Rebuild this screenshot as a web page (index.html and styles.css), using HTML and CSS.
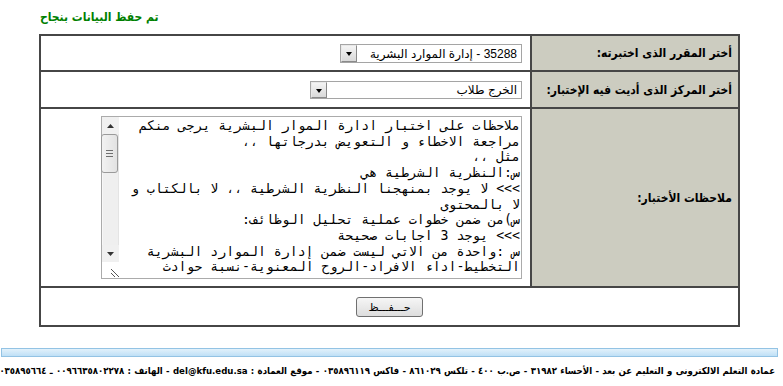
FILE: index.html
```html
<!DOCTYPE html>
<html lang="ar">
<head>
    <meta charset="UTF-8">
    <title>ملاحظات الاختبار</title>
    <link rel="stylesheet" href="styles.css">
</head>
<body>
    <div class="page">
        <p class="msg" dir="rtl">تم حفظ البيانات بنجاح</p>

        <table class="exam-form" dir="rtl">
            <tr class="row-course">
                <th class="label">أختر المقرر الذى اختبرته:</th>
                <td class="field">
                    <span class="combo combo-course">
                        <select>
                            <option>35288 - إدارة الموارد البشرية</option>
                        </select>
                        <span class="combo-btn"></span>
                    </span>
                </td>
            </tr>
            <tr class="row-center">
                <th class="label">أختر المركز الذى أديت فيه الإختبار:</th>
                <td class="field">
                    <span class="combo combo-center">
                        <select>
                            <option>الخرج طلاب</option>
                        </select>
                        <span class="combo-btn"></span>
                    </span>
                </td>
            </tr>
            <tr class="row-notes">
                <th class="label">ملاحظات الأختبار:</th>
                <td class="field">
                    <div class="notes-box">
                        <textarea class="notes" dir="rtl" wrap="off">ملاحظات على اختبار ادارة الموار البشرية يرجى منكم
مراجعة الاخطاء و التعويض بدرجاتها ،،
مثل ،،
س:النظرية الشرطية هي
&gt;&gt;&gt; لا يوجد بمنهجنا النظرية الشرطية ،، لا بالكتاب و
لا بالمحتوى
س)من ضمن خطوات عملية تحليل الوظائف:
&gt;&gt;&gt; يوجد 3 اجابات صحيحة
س :واحدة من الاتي ليست ضمن إدارة الموارد البشرية
التخطيط-اداء الافراد-الروح المعنوية-نسبة حوادث</textarea>
                        <!-- fake scrollbar, the screenshot browser hides real ones -->
                        <div class="vscroll">
                            <span class="sb-btn">
                                <svg width="7" height="4" viewBox="0 0 7 4"><path d="M0 4h7L3.5 0z" fill="#333"/></svg>
                            </span>
                            <span class="sb-track">
                                <span class="sb-thumb">
                                    <svg width="7" height="7" viewBox="0 0 7 7"><path d="M0 .5h7M0 3.5h7M0 6.5h7" stroke="#6f6f6f"/></svg>
                                </span>
                            </span>
                            <span class="sb-btn">
                                <svg width="7" height="4" viewBox="0 0 7 4"><path d="M0 0h7L3.5 4z" fill="#333"/></svg>
                            </span>
                            <span class="sb-corner">
                                <svg width="9" height="9" viewBox="0 0 9 9"><path d="M1 1l8 8M1 5l4 4" stroke="#555"/></svg>
                            </span>
                        </div>
                    </div>
                </td>
            </tr>
            <tr class="row-save">
                <td class="actions" colspan="2">
                    <button class="btn-save" type="button">حـــفـــظ</button>
                </td>
            </tr>
        </table>
    </div>

    <div class="footer">
        <div class="footer-bar"></div>
        <p class="footer-text" dir="rtl">عمادة التعلم الالكترونى و التعليم عن بعد - الأحساء ٣١٩٨٢ - ص.ب ٤٠٠ - تلكس ٨٦١٠٢٩ - فاكس ٠٣٥٨٩٦١١٩ - موقع العمادة : del@kfu.edu.sa - الهاتف : ٠٠٩٦٦٣٥٨٠٢٢٧٨ ـ ٠٣٥٨٩٥٦٦٤</p>
    </div>
</body>
</html>
```

FILE: styles.css
```css
* {
    box-sizing: border-box;
}

body {
    margin: 0;
    background: #fff;
    font-family: "DejaVu Sans", sans-serif;
    color: #000;
}

.page {
    width: 701px;
    margin-left: 39px;
}

.msg {
    margin: 0;
    padding: 9px 0 9px 1px;
    line-height: 16px;
    font-size: 12px;
    font-weight: bold;
    font-stretch: condensed;
    color: #008000;
    text-align: left;
}

/* main form table */
.exam-form {
    width: 701px;
    border-collapse: collapse;
    border: 2px solid #464646;
}

.exam-form th,
.exam-form td {
    border: 2px solid #464646;
    padding: 0;
}

.label {
    width: 208px;
    background: #ccccc0;
    text-align: right;
    padding: 0 6px 0 2px !important;
    font-size: 12px;
    font-weight: bold;
    font-stretch: condensed;
    white-space: nowrap;
    vertical-align: middle;
}

.field {
    text-align: right;
    padding: 0 8px !important;
    vertical-align: middle;
}

.row-course { height: 36px; }
.row-center { height: 37px; }
.row-notes { height: 179px; }
.row-save { height: 39px; }

/* dropdowns */
.combo {
    position: relative;
    display: inline-block;
    vertical-align: middle;
}

.combo select {
    appearance: none;
    -webkit-appearance: none;
    display: block;
    border: 1px solid #a5a5a5;
    border-radius: 0;
    background: #fff;
    font-family: "Liberation Sans", "DejaVu Sans", sans-serif;
    font-size: 12px;
    padding: 0 4px 0 20px;
    color: #000;
}

.combo-course select {
    width: 182px;
    height: 19px;
}

.combo-center select {
    width: 212px;
    height: 18px;
}

.combo-btn {
    position: absolute;
    left: 1px;
    top: 1px;
    bottom: 1px;
    width: 16px;
    background: linear-gradient(#f4f4f4, #d9d9d9);
    border: 1px solid #8a8a8a;
    border-top-color: #e8e8e8;
    border-left-color: #e8e8e8;
}

.combo-btn::after {
    content: "";
    position: absolute;
    left: 4px;
    top: 6px;
    border-left: 3px solid transparent;
    border-right: 3px solid transparent;
    border-top: 4px solid #000;
}

/* notes box */
.notes-box {
    display: inline-flex;
    vertical-align: middle;
    width: 421px;
    height: 163px;
    border: 1px solid #ababab;
    background: #fff;
}

.notes {
    flex: 1;
    min-width: 0;
    border: 0;
    outline: 0;
    resize: none;
    padding: 1px 1px 2px 3px;
    font-family: "DejaVu Sans Mono", monospace;
    font-size: 13.2px;
    line-height: 15.7px;
    white-space: pre;
    overflow: hidden;
    color: #000;
    background: #fff;
}

.vscroll {
    width: 17px;
    display: flex;
    flex-direction: column;
}

.sb-btn {
    height: 17px;
    display: flex;
    align-items: center;
    justify-content: center;
    background: #f0f0f0;
}

.sb-track {
    flex: 1;
    background: #efefef;
    border-left: 1px solid #f7f7f7;
    border-right: 1px solid #e4e4e4;
}

.sb-thumb {
    display: flex;
    align-items: center;
    justify-content: center;
    height: 39px;
    margin: 0 0 0 -1px;
    width: 17px;
    background: linear-gradient(90deg, #f2f2f2, #e2e2e2);
    border: 1px solid #9a9a9a;
    border-radius: 3px;
}

.sb-corner {
    height: 16px;
    display: flex;
    align-items: flex-end;
    padding: 0 0 1px 1px;
    background: #fff;
}

.actions {
    text-align: center;
    vertical-align: middle;
}

.btn-save {
    width: 67px;
    height: 20px;
    border: 1px solid #707070;
    border-radius: 3px;
    background: linear-gradient(#f6f6f6, #dddddd);
    font-family: "DejaVu Sans", sans-serif;
    font-size: 11px;
    padding: 0;
    color: #000;
}

/* footer */
.footer {
    margin-top: 21px;
}

.footer-bar {
    width: 777px;
    height: 9px;
    margin-left: 1px;
    border: 1px solid #93c3e4;
    background: linear-gradient(#e2f1fb, #bfe0f6);
}

.footer-text {
    margin: 7px 0 0;
    padding: 0 8px 0 4px;
    text-align: right;
    font-size: 9.55px;
    word-spacing: 0.3px;
    line-height: 14px;
    font-weight: bold;
    font-stretch: condensed;
    white-space: nowrap;
}
```
